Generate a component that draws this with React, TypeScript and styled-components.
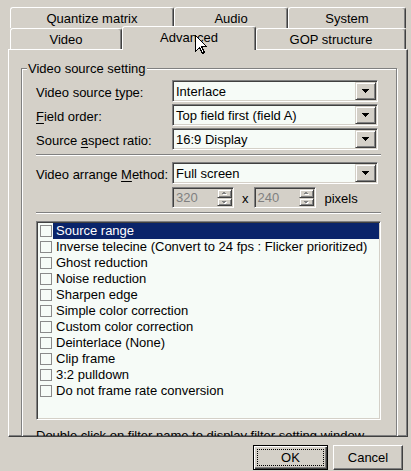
import React from "react";
import styled, { createGlobalStyle, css } from "styled-components";

const GlobalStyle = createGlobalStyle`
  html, body { margin: 0; padding: 0; background: #d4d0c8; }
  body {
    font-family: "Liberation Sans", Arial, sans-serif;
    font-size: 13px;
    color: #000;
    overflow: hidden;
  }
  * { box-sizing: border-box; }
`;

const Dialog = styled.div`
  position: relative;
  width: 411px;
  height: 471px;
  background: #d4d0c8;
  display: flex;
  flex-direction: column;
  overflow: hidden;
`;

const TabStrip = styled.div`
  padding: 7px 0 0 10px;
  display: flex;
  flex-direction: column;
`;

const TabRow = styled.div`
  display: flex;
  height: 21px;
  align-items: flex-start;
`;

const Tab = styled.div<{ $w: number; $active?: boolean }>`
  width: ${(p) => p.$w}px;
  height: 21px;
  flex: none;
  display: flex;
  align-items: center;
  justify-content: center;
  background: #d4d0c8;
  border-left: 1px solid #fff;
  border-top: 1px solid #fff;
  border-right: 1px solid #404040;
  border-radius: 3px 3px 0 0;
  box-shadow: inset -1px 0 0 #808080;
  white-space: nowrap;
  padding-top: 1px;
  ${(p) =>
    p.$active &&
    css`
      position: relative;
      z-index: 2;
      height: 24px;
      margin-top: -2px;
      padding-top: 0;
      padding-bottom: 2px;
    `}
`;

const Panel = styled.div`
  margin-left: 8px;
  width: 400px;
  height: 388px;
  flex: none;
  border-top: 1px solid #fff;
  border-left: 1px solid #fff;
  border-right: 1px solid #404040;
  border-bottom: 1px solid #404040;
  box-shadow: inset -1px -1px 0 #808080;
  padding: 18px 0 0 12px;
  overflow: hidden;
`;

const GroupBox = styled.div`
  position: relative;
  width: 376px;
  border: 1px solid #808080;
  box-shadow: inset 1px 1px 0 #fff, 1px 1px 0 #fff;
  padding: 11px 14px 40px 14px;
`;

const GroupTitle = styled.span`
  position: absolute;
  top: -8px;
  left: 5px;
  padding: 0 1px;
  line-height: 15px;
  background: #d4d0c8;
  white-space: nowrap;
`;

const FieldRow = styled.div<{ $mt?: number; $h?: number }>`
  display: grid;
  grid-template-columns: 136px 209px;
  align-items: center;
  height: ${(p) => p.$h ?? 22}px;
  margin-top: ${(p) => p.$mt ?? 0}px;
`;

const Label = styled.span`
  white-space: nowrap;
  padding-top: 2px;
  u { text-decoration: underline; text-underline-offset: 2px; }
`;

const Combo = styled.div`
  display: flex;
  width: 206px;
  height: 22px;
  background: #f6fbf7;
  border: 1px solid;
  border-color: #808080 #fff #fff #808080;
  box-shadow: inset 1px 1px 0 #404040, inset -1px -1px 0 #d4d0c8;
  padding: 1px;
`;

const ComboText = styled.div`
  flex: 1;
  padding: 2px 0 0 2px;
  line-height: 16px;
  white-space: nowrap;
  overflow: hidden;
`;

const RaisedButton = styled.div`
  display: flex;
  align-items: center;
  justify-content: center;
  background: #d4d0c8;
  border: 1px solid;
  border-color: #d4d0c8 #404040 #404040 #d4d0c8;
  box-shadow: inset 1px 1px 0 #fff, inset -1px -1px 0 #808080;
`;

const DropButton = styled(RaisedButton)`
  width: 21px;
  height: 18px;
  flex: none;
`;

const SpinGroup = styled.div`
  display: flex;
  align-items: center;
`;

const SpinBox = styled.div`
  display: flex;
  width: 62px;
  height: 21px;
  border: 1px solid;
  border-color: #808080 #fff #fff #808080;
  box-shadow: inset 1px 1px 0 #404040, inset -1px -1px 0 #d4d0c8;
  padding: 1px;
  background: #d4d0c8;
`;

const SpinValue = styled.div`
  flex: 1;
  color: #808080;
  padding: 1px 0 0 2px;
  line-height: 16px;
`;

const SpinButtons = styled.div`
  display: flex;
  flex-direction: column;
  width: 15px;
  flex: none;
`;

const SpinBtn = styled(RaisedButton)<{ $h: number }>`
  height: ${(p) => p.$h}px;
`;

const XLabel = styled.span`
  margin: 0 5px 0 8px;
  padding-top: 2px;
`;

const UnitLabel = styled.span`
  margin-left: 9px;
  padding-top: 2px;
`;

const Separator = styled.div<{ $mt: number }>`
  margin-top: ${(p) => p.$mt}px;
  width: 345px;
  height: 2px;
  border-top: 1px solid #808080;
  border-bottom: 1px solid #fff;
`;

const ListBox = styled.div`
  margin-top: 7px;
  width: 345px;
  height: 199px;
  border: 1px solid;
  border-color: #808080 #fff #fff #808080;
  box-shadow: inset 1px 1px 0 #404040, inset -1px -1px 0 #d4d0c8;
  padding: 1px;
  background: #f6fbf7;
`;

const ListRow = styled.div`
  display: flex;
  align-items: center;
  height: 16px;
`;

const Check = styled.span`
  width: 12px;
  height: 12px;
  flex: none;
  margin: 0 1px 0 2px;
  border: 1px solid #8a8a8a;
  background: #f6fbf7;
`;

const ItemText = styled.span<{ $selected?: boolean }>`
  flex: 1;
  height: 16px;
  line-height: 16px;
  padding-left: 3px;
  white-space: nowrap;
  overflow: hidden;
  background: ${(p) => (p.$selected ? "#0a246a" : "transparent")};
  color: ${(p) => (p.$selected ? "#fff" : "#000")};
`;

const Note = styled.div`
  margin-top: 8px;
  line-height: 15px;
  white-space: nowrap;
`;

const ButtonBar = styled.div`
  display: flex;
  justify-content: flex-end;
  gap: 5px;
  padding: 8px 8px 0 0;
`;

const PushButton = styled.button<{ $w: number; $default?: boolean }>`
  position: relative;
  width: ${(p) => p.$w}px;
  height: 25px;
  font: inherit;
  color: #000;
  background: #d4d0c8;
  padding: 0;
  margin: 0;
  border: 1px solid;
  border-color: #fff #404040 #404040 #fff;
  box-shadow: inset -1px -1px 0 #808080;
  ${(p) =>
    p.$default &&
    css`
      border-color: #000;
      box-shadow: inset 1px 1px 0 #fff, inset -1px -1px 0 #404040,
        inset -2px -2px 0 #808080;
      &::after {
        content: "";
        position: absolute;
        inset: 3px;
        border: 1px dotted #000;
      }
    `}
`;

const Cursor = styled.svg`
  position: absolute;
  left: 195px;
  top: 35px;
  z-index: 5;
`;

const DownArrow = () => (
  <svg width="7" height="4" viewBox="0 0 7 4" shapeRendering="crispEdges">
    <polygon points="0,0 7,0 3.5,4" fill="#000" />
  </svg>
);

const SpinArrow = ({ up }: { up?: boolean }) => (
  <svg width="7" height="5" viewBox="0 0 7 5" shapeRendering="crispEdges">
    {up ? (
      <>
        <polygon points="1.5,4 6.5,4 4,1.5" fill="#fff" />
        <polygon points="0.5,3 5.5,3 3,0.5" fill="#808080" />
      </>
    ) : (
      <>
        <polygon points="1.5,2 6.5,2 4,4.5" fill="#fff" />
        <polygon points="0.5,1 5.5,1 3,3.5" fill="#808080" />
      </>
    )}
  </svg>
);

const Spin = ({ value }: { value: string }) => (
  <SpinBox>
    <SpinValue>{value}</SpinValue>
    <SpinButtons>
      <SpinBtn $h={9}>
        <SpinArrow up />
      </SpinBtn>
      <SpinBtn $h={8}>
        <SpinArrow />
      </SpinBtn>
    </SpinButtons>
  </SpinBox>
);

const ComboBox = ({ value }: { value: string }) => (
  <Combo>
    <ComboText>{value}</ComboText>
    <DropButton>
      <DownArrow />
    </DropButton>
  </Combo>
);

const filters = [
  "Source range",
  "Inverse telecine (Convert to 24 fps : Flicker prioritized)",
  "Ghost reduction",
  "Noise reduction",
  "Sharpen edge",
  "Simple color correction",
  "Custom color correction",
  "Deinterlace (None)",
  "Clip frame",
  "3:2 pulldown",
  "Do not frame rate conversion",
];

export default function App() {
  return (
    <>
      <GlobalStyle />
      <Dialog>
        <TabStrip>
          <TabRow>
            <Tab $w={164}>Quantize matrix</Tab>
            <Tab $w={114}>Audio</Tab>
            <Tab $w={118}>System</Tab>
          </TabRow>
          <TabRow>
            <Tab $w={112}>Video</Tab>
            <Tab $w={134} $active>
              Advanced
            </Tab>
            <Tab $w={150}>GOP structure</Tab>
          </TabRow>
        </TabStrip>
        <Panel>
          <GroupBox>
            <GroupTitle>Video source setting</GroupTitle>
            <FieldRow>
              <Label>
                Video source <u>t</u>ype:
              </Label>
              <ComboBox value="Interlace" />
            </FieldRow>
            <FieldRow $mt={2}>
              <Label>
                <u>F</u>ield order:
              </Label>
              <ComboBox value="Top field first (field A)" />
            </FieldRow>
            <FieldRow $mt={2}>
              <Label>
                Source <u>a</u>spect ratio:
              </Label>
              <ComboBox value="16:9 Display" />
            </FieldRow>
            <Separator $mt={4} />
            <FieldRow $mt={6}>
              <Label>
                Video arrange <u>M</u>ethod:
              </Label>
              <ComboBox value="Full screen" />
            </FieldRow>
            <FieldRow $mt={3} $h={21}>
              <span />
              <SpinGroup>
                <Spin value="320" />
                <XLabel>x</XLabel>
                <Spin value="240" />
                <UnitLabel>pixels</UnitLabel>
              </SpinGroup>
            </FieldRow>
            <Separator $mt={4} />
            <ListBox>
              {filters.map((f, i) => (
                <ListRow key={f}>
                  <Check />
                  <ItemText $selected={i === 0}>{f}</ItemText>
                </ListRow>
              ))}
            </ListBox>
            <Note>Double click on filter name to display filter setting window</Note>
          </GroupBox>
        </Panel>
        <ButtonBar>
          <PushButton $w={75} $default>
            OK
          </PushButton>
          <PushButton $w={70}>Cancel</PushButton>
        </ButtonBar>
        <Cursor width="13" height="20" viewBox="0 0 13 20" shapeRendering="crispEdges">
          <path
            d="M0.5 0.5 V16.5 L4.5 12.5 L7.5 18.5 L9.5 17.5 L6.5 11.5 H11.5 Z"
            fill="#fff"
            stroke="#000"
            strokeWidth="1"
          />
        </Cursor>
      </Dialog>
    </>
  );
}
